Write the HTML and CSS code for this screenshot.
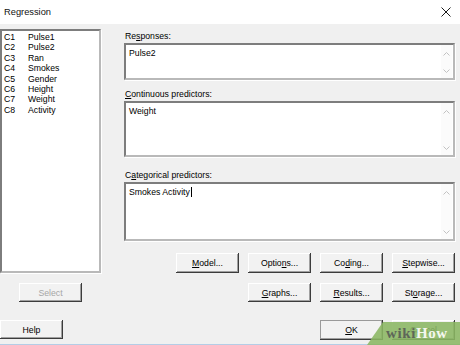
FILE: index.html
```html
<!DOCTYPE html>
<html lang="en">
<head>
    <meta charset="UTF-8">
    <title>Regression</title>
    <link rel="stylesheet" href="styles.css">
</head>
<body>
    <div class="window">
        <div class="titlebar">
            <span class="title">Regression</span>
            <svg class="close" width="10" height="10" viewBox="0 0 10 10">
                <path d="M0.5 0.5L9.5 9.5M9.5 0.5L0.5 9.5" stroke="#1a1a1a" stroke-width="1" fill="none"/>
            </svg>
        </div>

        <div class="dialog">
            <div class="left">
                <div class="varlist sunken">
                    <div class="var"><span class="col">C1</span><span>Pulse1</span></div>
                    <div class="var"><span class="col">C2</span><span>Pulse2</span></div>
                    <div class="var"><span class="col">C3</span><span>Ran</span></div>
                    <div class="var"><span class="col">C4</span><span>Smokes</span></div>
                    <div class="var"><span class="col">C5</span><span>Gender</span></div>
                    <div class="var"><span class="col">C6</span><span>Height</span></div>
                    <div class="var"><span class="col">C7</span><span>Weight</span></div>
                    <div class="var"><span class="col">C8</span><span>Activity</span></div>
                </div>
                <button class="btn select" disabled>Select</button>
                <button class="btn help">Help</button>
            </div>

            <div class="right">
                <div class="field-label first">Re<u>s</u>ponses:</div>
                <div class="field sunken resp">
                    <div class="field-text">Pulse2</div>
                    <div class="scroll">
                        <svg width="7" height="4" viewBox="0 0 7 4"><path d="M0.5 3.5L3.5 0.5L6.5 3.5" stroke="#c2c2c2" fill="none"/></svg>
                        <svg width="7" height="4" viewBox="0 0 7 4"><path d="M0.5 0.5L3.5 3.5L6.5 0.5" stroke="#c2c2c2" fill="none"/></svg>
                    </div>
                </div>

                <div class="field-label cont"><u>C</u>ontinuous predictors:</div>
                <div class="field sunken contf">
                    <div class="field-text">Weight</div>
                    <div class="scroll">
                        <svg width="7" height="4" viewBox="0 0 7 4"><path d="M0.5 3.5L3.5 0.5L6.5 3.5" stroke="#c2c2c2" fill="none"/></svg>
                        <svg width="7" height="4" viewBox="0 0 7 4"><path d="M0.5 0.5L3.5 3.5L6.5 0.5" stroke="#c2c2c2" fill="none"/></svg>
                    </div>
                </div>

                <div class="field-label cat">C<u>a</u>tegorical predictors:</div>
                <div class="field sunken catf">
                    <div class="field-text">Smokes Activity<span class="caret"></span></div>
                    <div class="scroll">
                        <svg width="7" height="4" viewBox="0 0 7 4"><path d="M0.5 3.5L3.5 0.5L6.5 3.5" stroke="#c2c2c2" fill="none"/></svg>
                        <svg width="7" height="4" viewBox="0 0 7 4"><path d="M0.5 0.5L3.5 3.5L6.5 0.5" stroke="#c2c2c2" fill="none"/></svg>
                    </div>
                </div>

                <div class="btn-row row1">
                    <button class="btn"><u>M</u>odel...</button>
                    <button class="btn">Optio<u>n</u>s...</button>
                    <button class="btn">Co<u>d</u>ing...</button>
                    <button class="btn"><u>S</u>tepwise...</button>
                </div>
                <div class="btn-row row2">
                    <button class="btn c2"><u>G</u>raphs...</button>
                    <button class="btn"><u>R</u>esults...</button>
                    <button class="btn">St<u>o</u>rage...</button>
                </div>
                <div class="btn-row row3">
                    <button class="btn c3 default"><u>O</u>K</button>
                    <button class="btn">Cancel</button>
                </div>
            </div>

            <div class="wikihow"><span class="wiki">wiki</span><span class="how">How</span></div>
        </div>
    </div>
</body>
</html>
```

FILE: styles.css
```css
* {
  box-sizing: border-box;
}

body {
  margin: 0;
  width: 460px;
  height: 345px;
  overflow: hidden;
  font-family: 'Liberation Sans', Arial, sans-serif;
  font-size: 8.7px;
  color: #000;
}

.window {
  width: 460px;
  height: 345px;
  background: #f0f0f0;
}

/* Title bar */
.titlebar {
  height: 24px;
  background: #ffffff;
  display: flex;
  align-items: center;
  justify-content: space-between;
  padding: 0 9px 0 4px;
}

.title {
  font-size: 9.3px;
  color: #111;
}

/* Dialog body */
.dialog {
  position: relative;
  display: flex;
  height: 321px;
  padding-top: 5px;
  border-bottom: 1px solid #b4cde6;
}

.left {
  width: 101px;
  display: flex;
  flex-direction: column;
  align-items: flex-start;
}

.right {
  width: 331px;
  margin-left: 23px;
}

/* Sunken 3D boxes */
.sunken {
  background: #ffffff;
  border-style: solid;
  border-width: 2px;
  border-color: #7d7d7d #b9b9b9 #b9b9b9 #7d7d7d;
  box-shadow: 1px 1px 0 #ffffff;
}

.varlist {
  width: 101px;
  height: 244px;
  padding: 1px 0 0 2px;
}

.var {
  display: flex;
  line-height: 10.4px;
  height: 10.4px;
}

.var .col {
  width: 24px;
}

.field-label {
  line-height: 14px;
  height: 14px;
  padding-left: 1px;
}

.field-label.cont {
  margin-top: 7px;
}

.field-label.cat {
  margin-top: 11px;
}

.field {
  display: flex;
  width: 331px;
}

.field.resp {
  height: 37px;
}

.field.contf {
  height: 56px;
}

.field.catf {
  height: 59px;
}

.field-text {
  flex: 1;
  padding: 3px 3px;
  line-height: 10px;
}

.caret {
  display: inline-block;
  width: 1px;
  height: 10px;
  margin-left: 1px;
  vertical-align: -2px;
  background: #000;
}

.scroll {
  width: 11px;
  margin-right: 1px;
  background: #fbfbfb;
  display: flex;
  flex-direction: column;
  justify-content: space-between;
  align-items: center;
  padding: 7px 0 5px;
}

.scroll svg {
  display: block;
}

/* Buttons */
.btn {
  width: 63px;
  height: 19px;
  padding: 0;
  font-family: inherit;
  font-size: 8.7px;
  color: #000;
  background: #f2f2f2;
  border: none;
  border-radius: 0;
  box-shadow: inset -1px -1px 0 #3c3c3c, inset 1px 1px 0 #ffffff, inset -2px -2px 0 #a0a0a0;
}

.btn.default {
  box-shadow: inset -1px -1px 0 #3c3c3c, inset 1px 1px 0 #9a9a9a, inset -2px -2px 0 #a0a0a0;
}

.btn.select {
  margin: 10px 0 0 19px;
  color: #a6a6a6;
}

.btn.help {
  margin-top: 18px;
}

.btn-row {
  display: grid;
  grid-template-columns: repeat(4, 63px);
  column-gap: 9px;
  justify-content: end;
}

.btn-row.row1 {
  margin-top: 12px;
  height: 20px;
}

.btn-row.row1 .btn {
  height: 20px;
}

.btn-row.row2 {
  margin-top: 10px;
}

.btn-row.row3 {
  margin-top: 18px;
}

.btn-row.row3 .btn {
  height: 20px;
}

.btn.c2 {
  grid-column-start: 2;
}

.btn.c3 {
  grid-column-start: 3;
}

/* Watermark */
.wikihow {
  position: absolute;
  right: 0;
  bottom: -1px;
  width: 93px;
  height: 23px;
  padding: 4px 0 0 19px;
  background: rgba(138, 182, 98, 0.88);
  clip-path: polygon(16px 0, 100% 0, 100% 100%, 0 100%);
  font-family: 'Liberation Serif', 'Times New Roman', serif;
  font-weight: bold;
  font-size: 15px;
  line-height: 15px;
  letter-spacing: 0.6px;
}

.wikihow .wiki {
  color: #5e6658;
}

.wikihow .how {
  color: #f4f7ef;
}
```
